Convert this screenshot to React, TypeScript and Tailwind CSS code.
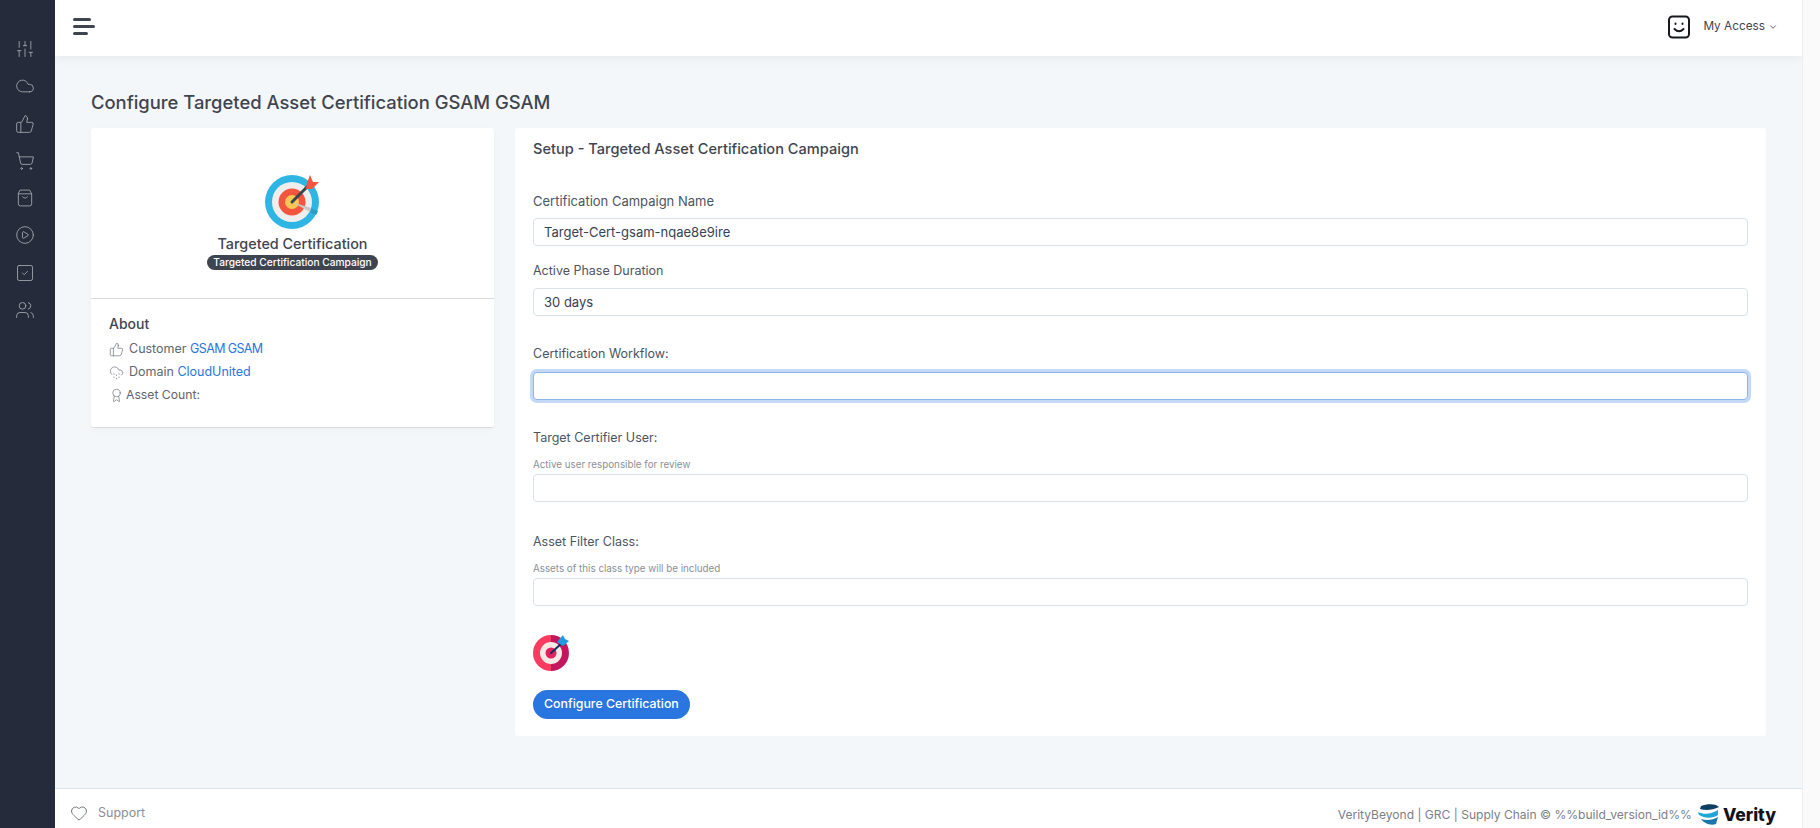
import React from 'react';
import { SlidersVertical, Cloud, ThumbsUp, ShoppingCart, CirclePlay, SquareCheck, Users, Heart, CloudDrizzle, Award, ChevronDown } from 'lucide-react';

const BagIcon: React.FC<{ size?: number; strokeWidth?: number; className?: string }> = ({ size = 20, strokeWidth = 1, className }) => (
    <svg width={size} height={size} viewBox="0 0 24 24" fill="none" stroke="currentColor" strokeWidth={strokeWidth} strokeLinecap="round" className={className}>
        <path d="M6.5 2.5 H17.5 L20 7 V19 a2.5 2.5 0 0 1 -2.5 2.5 H6.5 A2.5 2.5 0 0 1 4 19 V7 Z" />
        <path d="M4 7 H20" />
        <path d="M9 10.5 q3 3.5 6 0" />
    </svg>
);

const NAV_ICONS = [SlidersVertical, Cloud, ThumbsUp, ShoppingCart, BagIcon, CirclePlay, SquareCheck, Users];

interface FieldProps {
    label: string;
    help?: string;
    value?: string;
    focus?: boolean;
    className?: string;
    labelClass?: string;
}

const Field: React.FC<FieldProps> = ({ label, help, value, focus, className, labelClass = 'text-[12.5px]' }) => (
    <div className={className}>
        <div className={`h-[18px] leading-[18px] text-[#4b5563] ${focus ? '' : 'pt-[1px]'} ${labelClass}`}>{label}</div>
        {help && <div className="mt-[12px] h-[12px] pt-[1px] text-[9.8px] leading-[12px] text-[#8a9099]">{help}</div>}
        <div
            className={`h-[28px] rounded-[4px] bg-white px-[10px] text-[13px] leading-[26px] text-[#374151] border ${
                focus ? 'mt-[9px] border-[#8fb4ec] ring-[3px] ring-[#c5d9f6]' : help ? 'mt-[4px] border-[#d9e3ec]' : 'mt-[9px] border-[#d9e3ec]'
            }`}
        >
            {value}
        </div>
    </div>
);

const BlueTarget = () => (
    <svg width="54" height="54" viewBox="0 0 54 54" className="mr-[1px]">
        <circle cx="27" cy="27" r="27" fill="#2fb5e4" />
        <circle cx="27" cy="27" r="20" fill="#eeeeee" />
        <path d="M27 27 L53 36 A27 27 0 0 1 51 40 L45 37 A20 20 0 0 0 46 34 Z" fill="#2a9cc6" />
        <circle cx="27" cy="27" r="13.5" fill="#f4553f" />
        <circle cx="27" cy="27" r="7" fill="#fbc653" />
        <path d="M27 27 L46 33 L45 37 L27 27 Z" fill="#c9c9c9" />
        <path d="M27 27 L44 10" stroke="#36474f" strokeWidth="3" strokeLinecap="round" />
        <path d="M42 8 L45 0 L48 7 L54 7 L47 14 L41 14 Z" fill="#f4553f" />
    </svg>
);

const RedTarget = () => (
    <svg width="36" height="36" viewBox="0 0 36 36">
        <path d="M18 0 A18 18 0 0 0 18 36 Z" fill="#fb3b5f" />
        <path d="M18 0 A18 18 0 0 1 18 36 Z" fill="#c2175f" />
        <circle cx="18" cy="18" r="11" fill="#f8e9e4" />
        <circle cx="18" cy="18" r="5.5" fill="#e61f5d" />
        <path d="M18 18 L29 8" stroke="#12305c" strokeWidth="2" strokeLinecap="round" />
        <path d="M24 7 L30 0 L32 4 L36 6 L30 11 Z" fill="#1f9ae0" />
    </svg>
);

const VerityMark = () => (
    <svg width="21" height="22" viewBox="0 0 21 22">
        <path d="M3 2 C8 0 14 0 18 1 L21 3 C15 6 8 7 2 5 Z" fill="#0f3f63" />
        <path d="M0 8 C6 11 14 10 20 6 L20 11 C14 15 6 14 1 11 Z" fill="#1ea7d4" />
        <path d="M3 15 C9 17 15 16 20 13 L18 20 C12 22 6 19 3 15 Z" fill="#1b76ad" />
    </svg>
);

export default function App() {
    return (
        <div className="flex h-screen w-full overflow-hidden bg-[#f9f9f9] font-['Inter','Liberation_Sans',sans-serif] text-[#3f4550]">
            {/* Sidebar */}
            <aside className="flex w-[55px] shrink-0 flex-col items-center gap-[17.3px] bg-[#252b3b] pr-[5px] pt-[39px]">
                {NAV_ICONS.map((Icon, idx) => (
                    <Icon key={idx} size={20} strokeWidth={1} className="text-[#a9adb5]" />
                ))}
            </aside>

            <div className="flex min-w-0 flex-1 flex-col bg-[#f4f7fa]">
                {/* Top bar */}
                <header className="flex h-[56px] shrink-0 items-center justify-between bg-white pb-[3px] pl-[18px] pr-[24px] shadow-[0_2px_10px_rgba(0,0,0,0.06)]">
                    <div className="flex flex-col gap-[4px]">
                        <div className="h-[3px] w-[18px] rounded-full bg-[#3f4550]" />
                        <div className="h-[3px] w-[22px] rounded-full bg-[#3f4550]" />
                        <div className="h-[3px] w-[15px] rounded-full bg-[#3f4550]" />
                    </div>
                    <div className="flex items-center">
                        <svg width="24" height="24" viewBox="0 0 24 24" fill="none" stroke="#17191d" strokeWidth="2" strokeLinecap="round">
                            <rect x="2" y="1.5" width="20" height="21" rx="3.5" />
                            <path d="M8.5 8.5 v0.6 M15.5 8.5 v0.6" />
                            <path d="M7.5 14 q4.5 4.5 9 0" />
                        </svg>
                        <span className="ml-[12px] text-[11.8px] text-[#3f4550]">My Access</span>
                        <ChevronDown size={10} className="ml-[3px] text-[#3f4550]" />
                    </div>
                </header>

                {/* Page */}
                <main className="min-h-0 flex-1 pl-[36px] pr-[36px] pt-[33px]">
                    <h1 className="mb-[12px] text-[18.4px] font-medium leading-[27px] text-[#3f4550]">Configure Targeted Asset Certification GSAM GSAM</h1>
                    <div className="flex items-start gap-[21px]">
                        {/* Left card */}
                        <section className="w-[403px] shrink-0 rounded-[3px] border-b border-[#d9dbde] bg-white shadow-[0_2px_6px_rgba(0,0,0,0.03)]">
                            <div className="flex h-[171px] flex-col items-center border-b border-[#d9dbde] pt-[47px]">
                                <BlueTarget />
                                <div className="mt-[6px] text-[14.4px] font-medium leading-[18px] text-[#3f4550]">Targeted Certification</div>
                                <div className="mt-[2px] rounded-full bg-[#3f4550] px-[6px] text-[10.2px] font-medium leading-[15px] text-white">Targeted Certification Campaign</div>
                            </div>
                            <div className="h-[128px] px-[18px] pt-[15px] text-[12.5px] text-[#5f6570]">
                                <h2 className="text-[14px] font-medium leading-[20px] text-[#3f4550]">About</h2>
                                <div className="mt-[4px] flex h-[23px] items-center">
                                    <ThumbsUp size={15} strokeWidth={1} className="mr-[5px]" />
                                    <span>Customer <span className="tracking-[-0.05em] text-[#2a76e0]">GSAM GSAM</span></span>
                                </div>
                                <div className="flex h-[23px] items-center">
                                    <CloudDrizzle size={15} strokeWidth={1} className="mr-[5px]" />
                                    <span>Domain <span className="text-[#2a76e0]">CloudUnited</span></span>
                                </div>
                                <div className="flex h-[23px] items-center">
                                    <Award size={15} strokeWidth={1} className="mr-[2px]" />
                                    <span className="text-[12.2px]">Asset Count:</span>
                                </div>
                            </div>
                        </section>

                        {/* Right card */}
                        <section className="h-[608px] flex-1 rounded-[3px] bg-white px-[18px] pt-[11px]">
                            <h2 className="text-[14.6px] font-medium leading-[20px] text-[#3f4550]">Setup - Targeted Asset Certification Campaign</h2>
                            <Field className="mt-[32px]" labelClass="text-[13px]" label="Certification Campaign Name" value="Target-Cert-gsam-nqae8e9ire" />
                            <Field className="mt-[15px]" label="Active Phase Duration" value="30 days" />
                            <Field className="mt-[29px]" label="Certification Workflow:" focus />
                            <Field className="mt-[28px]" label="Target Certifier User:" help="Active user responsible for review" />
                            <Field className="mt-[30px]" label="Asset Filter Class:" help="Assets of this class type will be included" />
                            <div className="mt-[29px]"><RedTarget /></div>
                            <button className="mt-[19px] h-[29px] rounded-full bg-[#2a76e0] px-[11px] text-[12.35px] font-medium text-white">Configure Certification</button>
                        </section>
                    </div>
                </main>

                {/* Footer */}
                <footer className="flex h-[40px] shrink-0 items-center justify-between border-t border-[#dce5ee] bg-white pl-[15px] pr-[26px] pt-[9px]">
                    <div className="flex items-center text-[12.5px] text-[#8a9099]">
                        <Heart size={18} strokeWidth={1.25} className="mr-[10px] text-[#6b7078]" />
                        Support
                    </div>
                    <div className="mt-[4px] flex items-center text-[12.06px] text-[#7b8088]">
                        VerityBeyond | GRC | Supply Chain © %%build_version_id%%
                        <span className="ml-[6px]"><VerityMark /></span>
                        <span className="ml-[4px] text-[17.5px] font-extrabold leading-none text-[#111318]">Verity</span>
                    </div>
                </footer>
            </div>

            {/* Scrollbar gutter */}
            <div className="w-[18px] shrink-0 border-l border-[#eeeeee] bg-[#fafafa]" />
        </div>
    );
}
